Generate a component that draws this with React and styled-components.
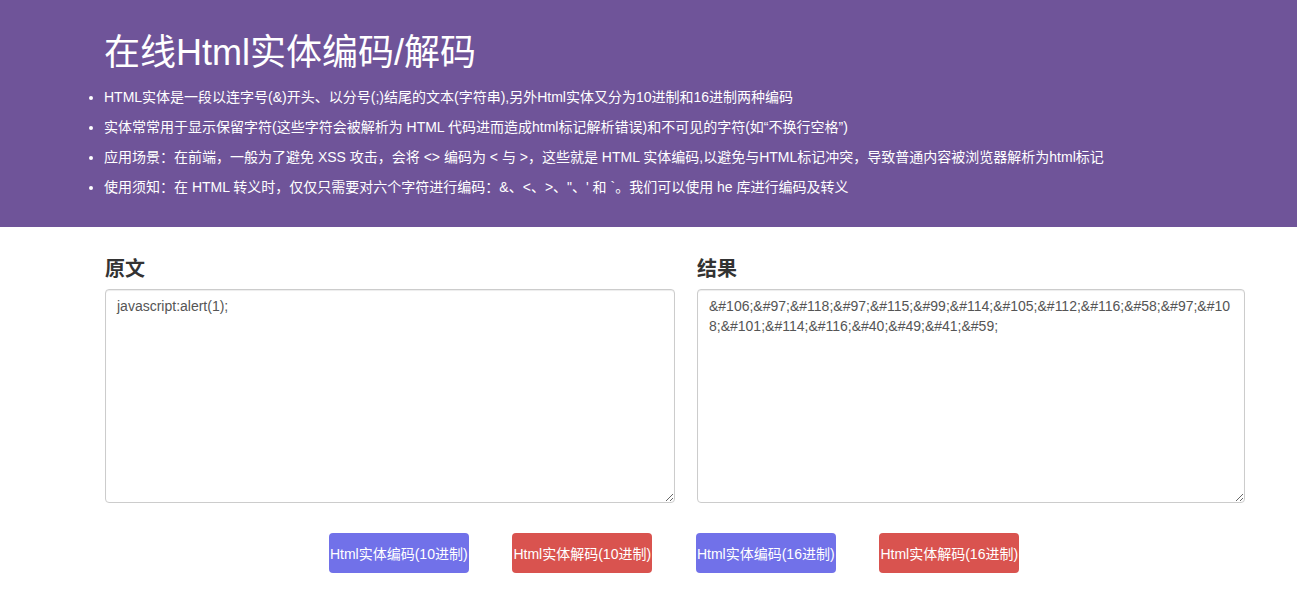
import React, { useState } from "react";
import styled, { createGlobalStyle } from "styled-components";

const GlobalStyle = createGlobalStyle`
    body {
        margin: 0;
        background: #fff;
        font-family: "Liberation Sans", Arial, "Noto Sans CJK SC", sans-serif;
        color: #333;
    }
`;

const tips = [
    "HTML实体是一段以连字号(&)开头、以分号(;)结尾的文本(字符串),另外Html实体又分为10进制和16进制两种编码",
    "实体常常用于显示保留字符(这些字符会被解析为 HTML 代码进而造成html标记解析错误)和不可见的字符(如“不换行空格”)",
    "应用场景：在前端，一般为了避免 XSS 攻击，会将 <> 编码为 < 与 >，这些就是 HTML 实体编码,以避免与HTML标记冲突，导致普通内容被浏览器解析为html标记",
    "使用须知：在 HTML 转义时，仅仅只需要对六个字符进行编码：&、<、>、\"、' 和 `。我们可以使用 he 库进行编码及转义",
];

const encode = (str, hex) =>
    Array.from(str)
        .map((c) => (hex ? `&#x${c.codePointAt(0).toString(16)};` : `&#${c.codePointAt(0)};`))
        .join("");

const decode = (str) =>
    str.replace(/&#(x?)([0-9a-fA-F]+);/g, (m, x, n) => String.fromCodePoint(parseInt(n, x ? 16 : 10)));

export default function App() {
    const [source, setSource] = useState("javascript:alert(1);");
    const [result, setResult] = useState(encode("javascript:alert(1);", false));

    return (
        <>
            <GlobalStyle />
            <Header>
                <Inner>
                    <Title>在线Html实体编码/解码</Title>
                    <Tips>
                        {tips.map((t) => (
                            <li key={t}>{t}</li>
                        ))}
                    </Tips>
                </Inner>
            </Header>
            <Main>
                <Columns>
                    <Panel>
                        <Label>原文</Label>
                        <Area value={source} onChange={(e) => setSource(e.target.value)} />
                    </Panel>
                    <Panel>
                        <Label>结果</Label>
                        <Area value={result} onChange={(e) => setResult(e.target.value)} />
                    </Panel>
                </Columns>
                <Actions>
                    <Button $kind="encode" onClick={() => setResult(encode(source, false))}>Html实体编码(10进制)</Button>
                    <Button $kind="decode" onClick={() => setResult(decode(source))}>Html实体解码(10进制)</Button>
                    <Button $kind="encode" onClick={() => setResult(encode(source, true))}>Html实体编码(16进制)</Button>
                    <Button $kind="decode" onClick={() => setResult(decode(source))}>Html实体解码(16进制)</Button>
                </Actions>
            </Main>
        </>
    );
}

const Header = styled.header`
    background: #6f5499;
    color: #fff;
    height: 227px;
    box-sizing: border-box;
    padding-top: 31px;
`;

const Inner = styled.div`
    width: 1140px;
    margin: 0 auto 0 104px;
`;

const Title = styled.h1`
    margin: 0 0 7px;
    font-size: 36px;
    font-weight: 400;
    line-height: 44px;
`;

const Tips = styled.ul`
    margin: 0;
    padding: 0;
    list-style: disc;

    & li {
        font-size: 14px;
        line-height: 30px;
    }
`;

const Main = styled.main`
    width: 1140px;
    margin: 0 0 0 105px;
    padding-top: 30px;
`;

const Columns = styled.div`
    display: grid;
    grid-template-columns: 570px 548px;
    column-gap: 22px;
`;

const Panel = styled.section`
    display: flex;
    flex-direction: column;
`;

const Label = styled.h3`
    margin: 0 0 7px;
    font-size: 20px;
    font-weight: 700;
    line-height: 25px;
    color: #333;
`;

const Area = styled.textarea`
    height: 214px;
    box-sizing: border-box;
    border: 1px solid #ccc;
    border-radius: 4px;
    box-shadow: inset 0 1px 1px rgba(0, 0, 0, 0.075);
    padding: 6px 11px;
    font-family: "Liberation Sans", Arial, "Noto Sans CJK SC", sans-serif;
    font-size: 14px;
    line-height: 20px;
    color: #555;
    resize: vertical;
    word-break: break-all;
`;

const Actions = styled.div`
    display: flex;
    justify-content: center;
    gap: 43.5px;
    margin-top: 30px;
    padding-right: 2px;
`;

const Button = styled.button`
    width: 140px;
    height: 40px;
    border: none;
    border-radius: 4px;
    padding: 0;
    color: #fff;
    font-family: "Liberation Sans", Arial, "Noto Sans CJK SC", sans-serif;
    font-size: 14px;
    background: ${(p) => (p.$kind === "encode" ? "#7171e9" : "#d9534f")};
    cursor: pointer;
    white-space: nowrap;
`;
